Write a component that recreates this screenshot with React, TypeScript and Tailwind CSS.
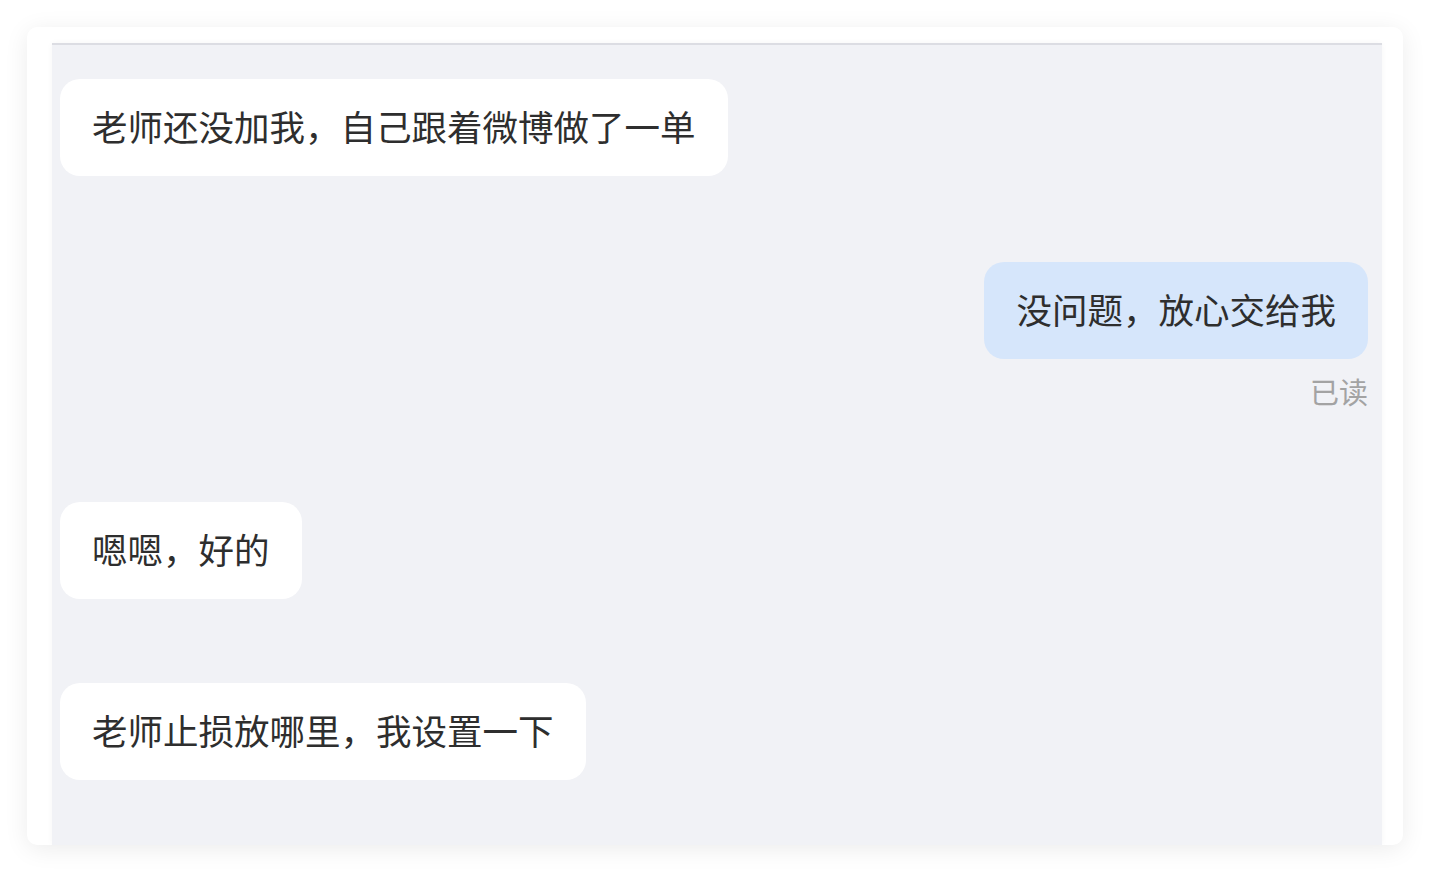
import React from "react";

const font = { fontFamily: '"Noto Sans CJK SC", "Noto Sans", sans-serif' };

function Bubble({ text, mine }: { text: string; mine?: boolean }) {
  return (
    <div
      className={`rounded-[20px] px-[32px] pt-[22px] pb-[26px] text-[35.5px] leading-[49px] text-[#2e2e2e] whitespace-nowrap ${
        mine ? "bg-[#d6e6fb]" : "bg-white"
      }`}
    >
      {text}
    </div>
  );
}

export default function App() {
  return (
    <div className="w-[1430px] h-[872px] bg-white pt-[27px] pl-[27px]" style={font}>
      <div className="w-[1376px] h-[818px] rounded-[10px] bg-white shadow-[0_4px_24px_rgba(0,0,0,0.08)] pt-[16px] pl-[25px] pr-[21px] overflow-hidden">
        <div className="h-full bg-[#f1f2f6] border-t-2 border-[#dcdde3] shadow-[0_0_6px_rgba(0,0,0,0.04)] pl-[8px] pr-[14px] pt-[34px] flex flex-col">
          <div className="flex justify-start">
            <Bubble text="老师还没加我，自己跟着微博做了一单" />
          </div>
          <div className="flex flex-col items-end mt-[86px]">
            <Bubble text="没问题，放心交给我" mine />
            <div className="mt-[12px] text-[29px] leading-[40px] text-[#a3a3a3]">已读</div>
          </div>
          <div className="flex justify-start mt-[91px]">
            <Bubble text="嗯嗯，好的" />
          </div>
          <div className="flex justify-start mt-[84px]">
            <Bubble text="老师止损放哪里，我设置一下" />
          </div>
        </div>
      </div>
    </div>
  );
}
